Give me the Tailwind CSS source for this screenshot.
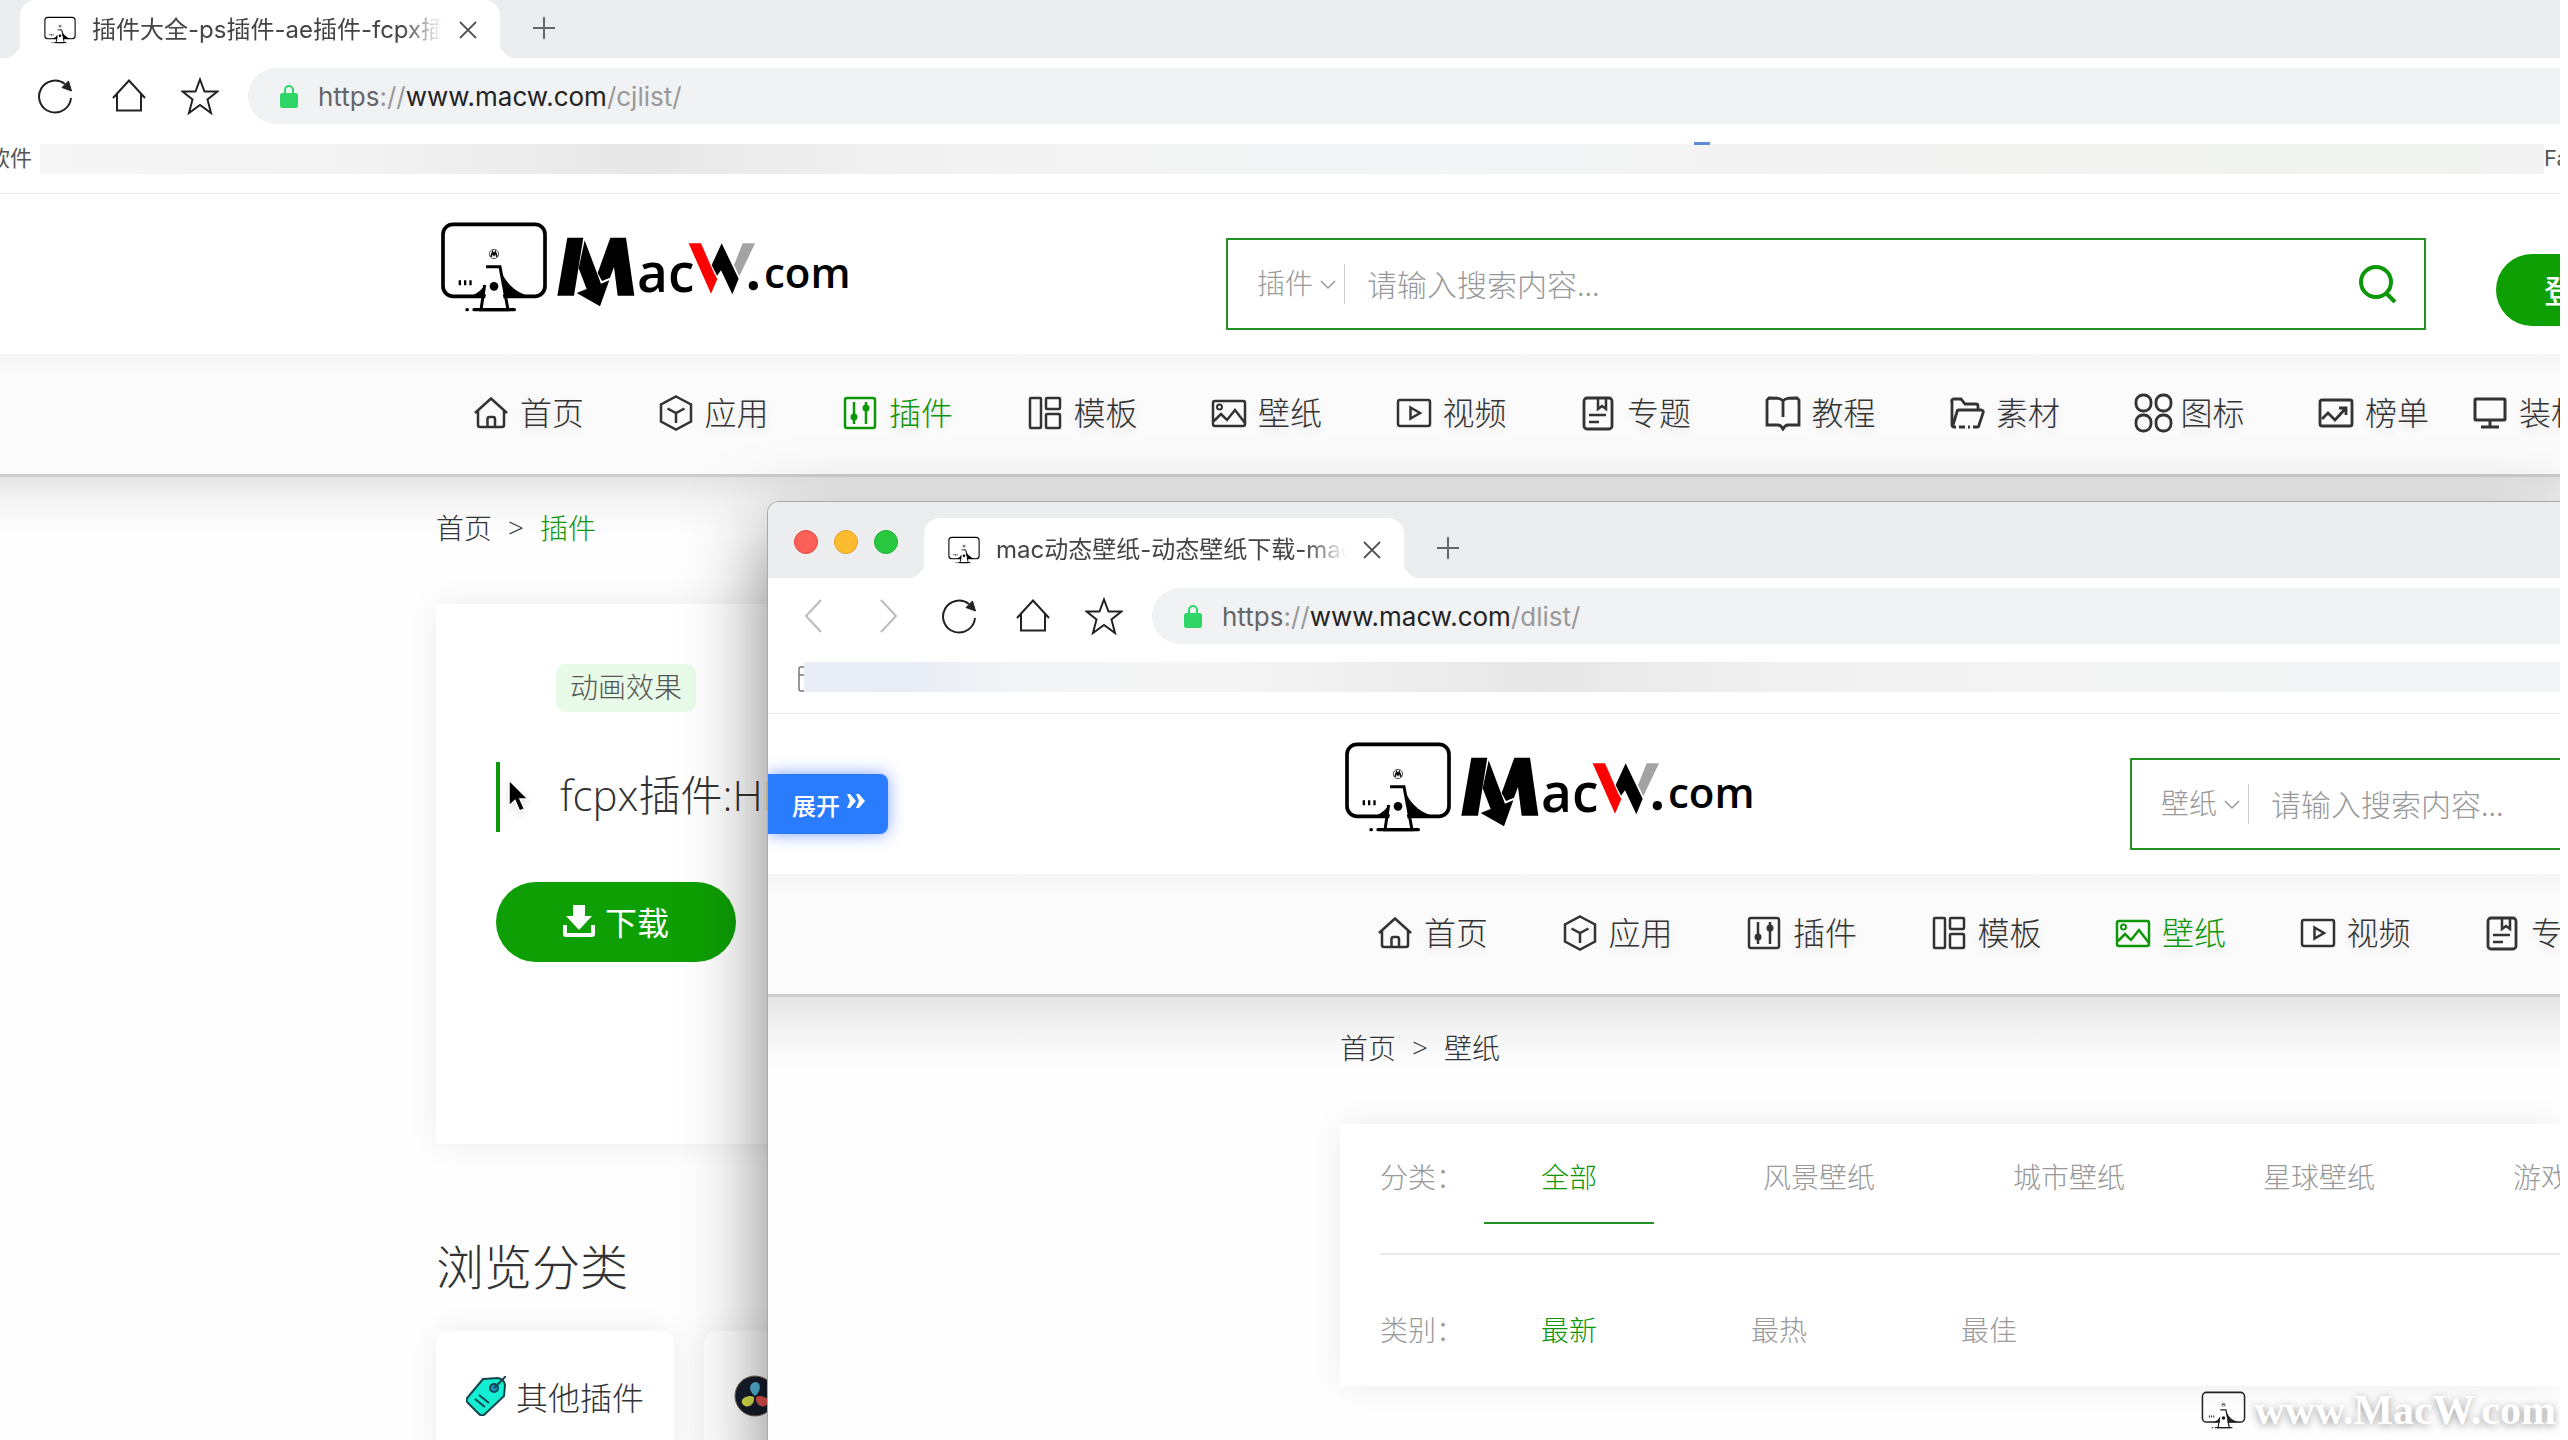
<!DOCTYPE html>
<html lang="zh-CN">
<head>
<meta charset="utf-8">
<title>插件大全-ps插件-ae插件-fcpx插件</title>
<script src="https://cdn.jsdelivr.net/npm/@tailwindcss/browser@4"></script>
</head>
<body class="bg-white font-['Noto_Sans_CJK_SC',sans-serif] text-[#333]">

<svg class="hidden" aria-hidden="true">
  <symbol id="monitor" viewBox="30 34 324 276">
    <rect x="39" y="44" width="306" height="216" rx="30" fill="none" stroke="currentColor" stroke-width="11"/>
    <circle cx="192" cy="133" r="14" fill="none" stroke="currentColor" stroke-width="2"/>
    <path d="M183 141l5-14 4 9 4-9 5 14" fill="none" stroke="currentColor" stroke-width="5"/>
    <path d="M86 212h7v15h-7zM102 212h7v15h-7zM118 212h7v15h-7z" fill="currentColor"/>
    <path d="M112 262C136 256 152 244 164 226L160 262zM208 172C222 214 252 246 294 258V262H228z" fill="currentColor"/>
    <path d="M164 226L153 300H234L210 171H168" fill="none" stroke="currentColor" stroke-width="9"/>
    <path d="M166 262L162 295H226L216 240L206 210H176L170 250z" fill="#fff"/>
    <circle cx="192" cy="230" r="13" fill="currentColor"/>
    <path d="M132 300H253M111 300h1" stroke="currentColor" stroke-width="10" stroke-linecap="round"/>
  </symbol>
  <symbol id="logo" viewBox="30 34 1230 279">
    <use href="#monitor" x="30" y="34" width="324" height="276" color="#000"/>
    <path d="M412 84H460L432 258H382z" fill="#000"/>
    <path d="M464 92L513 222L538 212L510 290L440 250L470 238L446 176z" fill="#000"/>
    <path d="M541 84H588L613 258H563L552 172L540 204L516 214L503 190z" fill="#000"/>
    <text x="621" y="246" font-family="Open Sans" font-weight="600" font-size="160" fill="#000">ac</text>
    <path d="M776 101H813L852 190L862 208L843 252z" fill="#f00"/>
    <path d="M875 101L926 207L907 254L873 182L861 198L845 166z" fill="#000"/>
    <path d="M938 101H975L928 200L912 166z" fill="#a3a3a3"/>
    <circle cx="970" cy="228" r="14" fill="#000"/>
    <text x="1002" y="236" font-family="Open Sans" font-weight="600" font-size="126" fill="#000">com</text>
  </symbol>
  <symbol id="close" viewBox="0 0 18 18"><path d="M1 1l16 16M17 1L1 17" fill="none" stroke="#555" stroke-width="1.800"/></symbol>
  <symbol id="plus" viewBox="0 0 24 24"><path d="M12 1v22M1 12h22" fill="none" stroke="#666" stroke-width="2"/></symbol>
  <symbol id="reload" viewBox="0 0 36 36"><path d="M34 20A16 16 0 1 1 28 6" fill="none" stroke="#222" stroke-width="2"/><path d="M34.500 13L25 9.500L31.500 3z" fill="#222" stroke="#222"/></symbol>
  <symbol id="home" viewBox="0 0 36 36"><path d="M2 20L18 2.500L34 20M6 16V32.500H30V16" fill="none" stroke="#222" stroke-width="2"/></symbol>
  <symbol id="star" viewBox="0 0 38 38"><path d="M19 2.500L23.500 14.500H36.500L26.500 22.500L30 36L19 28L8 36L11.500 22.500L1.500 14.500H14.500z" fill="none" stroke="#222" stroke-width="2"/></symbol>
  <symbol id="lock" viewBox="0 0 18 23"><rect y="8" width="18" height="15" rx="2.500" fill="#2fd566"/><path d="M5 9V5a4 4 0 0 1 8 0V9" fill="none" stroke="#2fd566" stroke-width="2"/></symbol>
  <symbol id="chev" viewBox="0 0 16 10"><path d="M1 1l7 7 7-7" fill="none" stroke="#999" stroke-width="1.500"/></symbol>
  <symbol id="search" viewBox="0 0 40 40"><circle cx="18" cy="18" r="15" fill="none" stroke="#0d9608" stroke-width="4"/><path d="M29 30l8 8" stroke="#0d9608" stroke-width="4"/></symbol>
  <symbol id="n-home" viewBox="0 0 36 36"><path d="M2 18L18 3.500L34 18M5 15.500V30a2 2 0 0 0 2 2H29a2 2 0 0 0 2-2V15.500M14.500 32V24a2 2 0 0 1 2-2H20a2 2 0 0 1 2 2V32" fill="none" stroke="currentColor" stroke-width="2.500"/></symbol>
  <symbol id="n-app" viewBox="0 0 36 36"><path d="M18 1.500L33 9.500V26.500L18 34.500L3 26.500V9.500zM9.500 13.500L18 18L26.500 13.500M18 18V28" fill="none" stroke="currentColor" stroke-width="2.500"/></symbol>
  <symbol id="n-plug" viewBox="0 0 36 36"><rect x="3" y="3" width="30" height="30" rx="2" fill="none" stroke="currentColor" stroke-width="2.500"/><path d="M12 7V29M24 7V29" stroke="currentColor" stroke-width="2.500"/><circle cx="12" cy="22" r="3.500" fill="currentColor"/><circle cx="24" cy="13" r="3.500" fill="currentColor"/></symbol>
  <symbol id="n-tpl" viewBox="0 0 36 36"><path d="M4 3h9a1 1 0 0 1 1 1V32a1 1 0 0 1-1 1H4a1 1 0 0 1-1-1V4a1 1 0 0 1 1-1zM20 3H32a1 1 0 0 1 1 1V13a1 1 0 0 1-1 1H20a1 1 0 0 1-1-1V4a1 1 0 0 1 1-1zM20 19H32a1 1 0 0 1 1 1V32a1 1 0 0 1-1 1H20a1 1 0 0 1-1-1V20a1 1 0 0 1 1-1z" fill="none" stroke="currentColor" stroke-width="2.500"/></symbol>
  <symbol id="n-pic" viewBox="0 0 36 36"><rect x="2" y="6" width="32" height="25" rx="2" fill="none" stroke="currentColor" stroke-width="2.500"/><circle cx="8.500" cy="12" r="2.500" fill="none" stroke="currentColor" stroke-width="2"/><path d="M3 26l7-7 6 6 8-10 10 13" fill="none" stroke="currentColor" stroke-width="2.500"/></symbol>
  <symbol id="n-video" viewBox="0 0 36 36"><rect x="2" y="5" width="32" height="26" rx="2" fill="none" stroke="currentColor" stroke-width="2.500"/><path d="M14.500 12.500L24 18L14.500 23.500z" fill="none" stroke="currentColor" stroke-width="2.500"/></symbol>
  <symbol id="n-topic" viewBox="0 0 36 36"><rect x="4" y="3" width="28" height="31" rx="3" fill="none" stroke="currentColor" stroke-width="2.800"/><path d="M18 3V14l4-3 4 3V3M9 20H26M9 27H19" fill="none" stroke="currentColor" stroke-width="2.500"/></symbol>
  <symbol id="n-book" viewBox="0 0 36 36"><path d="M18 6C16 3 12 3 4 3L2 5V30H13C16 30 17 32 18 34C19 32 20 30 23 30H34V5L32 3C24 3 20 3 18 6zM18 6V22" fill="none" stroke="currentColor" stroke-width="2.800"/></symbol>
  <symbol id="n-folder" viewBox="0 0 36 36"><path d="M7 32H5a2 2 0 0 1-2-2V7a2 2 0 0 1 2-3H12l4 5H27a2 2 0 0 1 2 2V15M4 30L8 17a2 2 0 0 1 2-2H32a2 2 0 0 1 2 3L30 30a2 2 0 0 1-2 2H24M10 32h6M19 32h2" fill="none" stroke="currentColor" stroke-width="2.800"/></symbol>
  <symbol id="n-icons" viewBox="0 0 40 40"><g fill="none" stroke="currentColor" stroke-width="2.800"><rect x="2" y="2" width="15" height="16" rx="7"/><rect x="22" y="2" width="15" height="16" rx="7"/><rect x="2" y="22" width="15" height="16" rx="7"/><rect x="22" y="22" width="15" height="16" rx="7"/></g></symbol>
  <symbol id="n-rank" viewBox="0 0 36 36"><rect x="2" y="5" width="32" height="26" rx="2" fill="none" stroke="currentColor" stroke-width="2.800"/><path d="M4 24l6-6 7 7L28 13M21 13h7v7" fill="none" stroke="currentColor" stroke-width="2.800"/></symbol>
  <symbol id="n-pc" viewBox="0 0 36 36"><path d="M4 4H32a1 1 0 0 1 1 1V24a1 1 0 0 1-1 1H4a1 1 0 0 1-1-1V5a1 1 0 0 1 1-1zM18 25V31M9 32H27" fill="none" stroke="currentColor" stroke-width="3"/></symbol>
</svg>

<div class="relative mr-2 h-screen overflow-hidden">

  <!-- Back window -->
  <div class="font-['Inter','Noto_Sans_CJK_SC',sans-serif]">
    <div class="flex h-[58px] bg-[#ecedef] pl-5">
      <div class="relative flex w-[480px] items-center rounded-t-2xl bg-white pt-[2px] pl-6 before:absolute before:bottom-0 before:-left-4 before:size-4 before:bg-[radial-gradient(circle_at_0_0,transparent_16px,white_16px)] after:absolute after:-right-4 after:bottom-0 after:size-4 after:bg-[radial-gradient(circle_at_100%_0,transparent_16px,white_16px)]">
        <svg class="h-7 w-8 text-black"><use href="#monitor"/></svg>
        <span class="ml-4 w-[350px] overflow-hidden text-2xl whitespace-nowrap text-[#444] [mask-image:linear-gradient(to_right,black_310px,transparent_350px)]">插件大全-ps插件-ae插件-fcpx插件</span>
        <button aria-label="关闭标签页" class="ml-[17px]"><svg class="size-[18px]"><use href="#close"/></svg></button>
      </div>
      <button aria-label="新标签页" class="ml-8 pb-[2px]"><svg class="size-6"><use href="#plus"/></svg></button>
    </div>
    <div class="flex h-[76px] items-center pl-[37px]">
      <button aria-label="刷新"><svg class="size-9"><use href="#reload"/></svg></button>
      <button aria-label="主页" class="ml-[38px]"><svg class="size-9"><use href="#home"/></svg></button>
      <button aria-label="收藏" class="ml-[34px]"><svg class="size-[38px]"><use href="#star"/></svg></button>
      <div class="ml-[29px] flex h-14 flex-1 items-center rounded-l-full bg-[#f1f2f4] pl-8 text-[26px] text-[#666]">
        <svg class="mr-5 h-[23px] w-[18px] shrink-0"><use href="#lock"/></svg>
        <span>https<span class="text-[#999]">://</span><span class="text-[#222]">www.macw.com</span><span class="text-[#999]">/cjlist/</span></span>
      </div>
    </div>
    <div class="relative flex h-[60px] items-start overflow-hidden border-b border-[#e6e6e6] pt-[10px] text-[22px] leading-[28px] whitespace-nowrap text-[#555]">
      <span class="-ml-[12px] w-[52px] shrink-0">软件</span>
      <div class="h-[30px] flex-1 bg-[linear-gradient(to_right,#f6f6f6_0,#f3f3f3_12%,#e8e7e7_24%,#f0f0f0_33%,#f3f3f3_40%,#f3f5f6_56%,#f3f2f2_72%,#f1f4f1_95%,#f2f2f2_100%)]"></div>
      <span class="w-4 shrink-0 overflow-hidden">Fa</span>
      <i class="absolute top-2 left-[1694px] h-[3px] w-4 bg-[#5b8bd8]"></i>
    </div>
  </div>

  <div class="font-light">
    <header class="relative z-10 flex h-[160px] items-start overflow-hidden bg-white pt-[27px] pl-[440px]">
      <a href="#" aria-label="MacW.com" class="shrink-0"><svg class="h-[93px] w-[410px]"><use href="#logo"/></svg></a>
      <form class="mt-[17px] ml-[376px] flex h-[92px] w-[1200px] shrink-0 items-center border-2 border-[#23901f] pr-[26px] pl-[29px]">
        <label class="relative flex h-10 w-[88px] items-center border-r border-[#ccc]">
          <select aria-label="搜索类别" class="w-full appearance-none pb-1 text-[28px] leading-9 text-[#999]"><option>插件</option></select>
          <svg class="absolute top-4 right-2 h-[10px] w-4"><use href="#chev"/></svg>
        </label>
        <input type="text" aria-label="搜索" placeholder="请输入搜索内容..." class="ml-[22px] min-w-0 flex-1 pb-[2px] text-[30px] placeholder-[#999]">
        <button type="button" aria-label="搜索"><svg class="size-10"><use href="#search"/></svg></button>
      </form>
      <button class="mt-[33px] ml-[70px] h-[72px] w-[160px] shrink-0 rounded-full bg-[#0d9f04] pb-[2px] text-[32px] font-medium text-white">登录</button>
    </header>
    <nav class="relative flex h-[123px] items-start overflow-hidden border-b-[3px] border-[#ccc] bg-linear-to-b from-[#f5f5f5] to-[#fbfbfb] to-20% pt-[33px] pl-[473px] text-[32px] leading-[48px] whitespace-nowrap [text-shadow:0_4px_8px_rgba(0,0,0,.12)]">
      <div class="grid w-[1845px] shrink-0 grid-cols-10">
        <a href="#" class="flex items-center gap-[11px]"><svg class="mt-1 size-9"><use href="#n-home"/></svg>首页</a>
        <a href="#" class="flex items-center gap-[11px]"><svg class="mt-1 size-9"><use href="#n-app"/></svg>应用</a>
        <a href="#" class="flex items-center gap-[11px] text-[#0d9608]"><svg class="mt-1 size-9"><use href="#n-plug"/></svg>插件</a>
        <a href="#" class="flex items-center gap-[11px]"><svg class="mt-1 size-9"><use href="#n-tpl"/></svg>模板</a>
        <a href="#" class="flex items-center gap-[11px]"><svg class="mt-1 size-9"><use href="#n-pic"/></svg>壁纸</a>
        <a href="#" class="flex items-center gap-[11px]"><svg class="mt-1 size-9"><use href="#n-video"/></svg>视频</a>
        <a href="#" class="flex items-center gap-[11px]"><svg class="mt-1 size-9"><use href="#n-topic"/></svg>专题</a>
        <a href="#" class="flex items-center gap-[11px]"><svg class="mt-1 size-9"><use href="#n-book"/></svg>教程</a>
        <a href="#" class="flex items-center gap-[11px]"><svg class="mt-1 size-9"><use href="#n-folder"/></svg>素材</a>
        <a href="#" class="flex items-center gap-[7px]"><svg class="mt-1 size-10"><use href="#n-icons"/></svg>图标</a>
      </div>
      <a href="#" class="flex w-[154px] shrink-0 items-center gap-[11px]"><svg class="mt-1 size-9"><use href="#n-rank"/></svg>榜单</a>
      <a href="#" class="flex shrink-0 items-center gap-[11px]"><svg class="mt-1 size-9"><use href="#n-pc"/></svg>装机</a>
    </nav>
    <main class="bg-[linear-gradient(to_bottom,#e4e4e4,#f4f4f4_24px,#fefefe_56px)] pt-[30px] pl-[436px]">
      <div class="flex h-10 items-center gap-4 text-[28px] leading-10"><a href="#">首页</a><span class="font-['Open_Sans']">&gt;</span><a href="#" class="text-[#0d9608]">插件</a></div>
      <section class="mt-[57px] flex h-[540px] flex-col items-start bg-white pt-[60px] pl-[60px] shadow-[0_0_30px_rgba(0,0,0,.07)]">
        <a href="#" class="ml-[60px] rounded-[10px] bg-[#e8fae8] px-[14px] pb-1 text-[28px] leading-[44px] text-[#555]">动画效果</a>
        <h1 class="mt-[50px] border-l-4 border-[#0d9608] pb-1 pl-[60px] font-['Open_Sans','Noto_Sans_CJK_SC'] text-[42px] leading-[66px] font-light whitespace-nowrap">fcpx插件:HD</h1>
        <button class="mt-[50px] flex h-20 w-60 items-center justify-center gap-[10px] rounded-full bg-[#0d9f04] pb-[2px] text-[32px] font-normal text-white"><svg class="size-8" viewBox="0 0 32 32" fill="#fff"><path d="M10 0h12v11h7L16 25L3 11h7zM0 20h4v8h24v-8h4v9a3 3 0 0 1-3 3H3a3 3 0 0 1-3-3z"/></svg>下载</button>
      </section>
      <h2 class="mt-[84px] text-[48px] leading-[72px] font-light">浏览分类</h2>
      <div class="mt-[31px] flex gap-[30px] text-[32px] whitespace-nowrap">
        <a href="#" class="flex h-[130px] w-[238px] shrink-0 items-center gap-[10px] rounded-xl bg-white pl-[30px] shadow-[0_0_30px_rgba(0,0,0,.07)]">
          <svg class="size-10 shrink-0" viewBox="0 0 40 40"><path d="M17 3L32 2Q38 3 39 9L38 20L19 38Q16 41 13 38L2 27Q-1 24 2 21z" fill="#14efd3" stroke="#17454d" stroke-width="2"/><circle cx="28" cy="12" r="4" fill="#1697c9" stroke="#17454d" stroke-width="2"/><path d="M28 12L40 0M13 19l10 8M9 23l10 8" stroke="#17454d" stroke-width="2" fill="none"/></svg>其他插件</a>
        <a href="#" aria-label="达芬奇插件" class="flex h-[130px] w-[238px] shrink-0 items-center rounded-xl bg-white pl-[30px] shadow-[0_0_30px_rgba(0,0,0,.07)]">
          <svg class="size-[42px] shrink-0" viewBox="0 0 42 42"><circle cx="21" cy="21" r="20" fill="#161d2b" stroke="#7b6a58"/><path d="M21 21C14 16 15 8 21 7S28 16 21 21z" fill="#53b9de"/><path d="M20 22C21 31 12 34 8.500 29S14 19 20 22z" fill="#dbe34c"/><path d="M22 22C21 31 30 34 33.500 29S28 19 22 22z" fill="#e8564f"/></svg></a>
      </div>
    </main>
  </div>

  <svg class="absolute top-[778px] left-[507px] h-9 w-6 drop-shadow-md" viewBox="0 0 24 36"><path d="M2 2V28L8 22.500L12.500 33L17.500 31L13 21H21z" fill="#000" stroke="#fff" stroke-width="1.500"/></svg>

  <!-- Front window -->
  <div class="absolute top-[501px] right-0 -bottom-10 left-[767px] z-20 overflow-hidden rounded-tl-xl border-t border-l border-[#a8a8a8] bg-white shadow-[0_30px_80px_rgba(0,0,0,.5)]">
    <div class="font-['Inter','Noto_Sans_CJK_SC',sans-serif]">
      <div class="flex h-[76px] items-end bg-[#ecedef] pl-[26px]">
        <div class="flex h-[72px] w-[130px] gap-4">
          <button aria-label="关闭" class="mt-6 size-6 rounded-full border border-[#e2463f] bg-[#fc5f57]"></button>
          <button aria-label="最小化" class="mt-6 size-6 rounded-full border border-[#e0a02a] bg-[#fdbc2e]"></button>
          <button aria-label="最大化" class="mt-6 size-6 rounded-full border border-[#1fae33] bg-[#28c840]"></button>
        </div>
        <div class="relative flex h-[60px] w-[480px] items-center rounded-t-2xl bg-white pt-1 pl-6 before:absolute before:bottom-0 before:-left-4 before:size-4 before:bg-[radial-gradient(circle_at_0_0,transparent_16px,white_16px)] after:absolute after:-right-4 after:bottom-0 after:size-4 after:bg-[radial-gradient(circle_at_100%_0,transparent_16px,white_16px)]">
          <svg class="h-7 w-8 text-black"><use href="#monitor"/></svg>
          <span class="ml-4 w-[350px] overflow-hidden text-2xl whitespace-nowrap text-[#444] [mask-image:linear-gradient(to_right,black_310px,transparent_350px)]">mac动态壁纸-动态壁纸下载-mac壁纸</span>
          <button aria-label="关闭标签页" class="ml-[17px]"><svg class="size-[18px]"><use href="#close"/></svg></button>
        </div>
        <button aria-label="新标签页" class="ml-8 flex h-[60px] items-center"><svg class="size-6"><use href="#plus"/></svg></button>
      </div>
      <div class="flex h-[76px] items-center pl-[36px]">
        <button aria-label="后退"><svg class="h-[34px] w-[18px]" viewBox="0 0 18 34"><path d="M17 1L2 17L17 33" fill="none" stroke="#bbb" stroke-width="2"/></svg></button>
        <button aria-label="前进" class="ml-[58px]"><svg class="h-[34px] w-[18px]" viewBox="0 0 18 34"><path d="M1 1L16 17L1 33" fill="none" stroke="#bbb" stroke-width="2"/></svg></button>
        <button aria-label="刷新" class="ml-[43px]"><svg class="size-9"><use href="#reload"/></svg></button>
        <button aria-label="主页" class="ml-[38px]"><svg class="size-9"><use href="#home"/></svg></button>
        <button aria-label="收藏" class="ml-[34px]"><svg class="size-[38px]"><use href="#star"/></svg></button>
        <div class="ml-[29px] flex h-14 flex-1 items-center rounded-l-full bg-[#f1f2f4] pl-8 text-[26px] text-[#666]">
          <svg class="mr-5 h-[23px] w-[18px] shrink-0"><use href="#lock"/></svg>
          <span>https<span class="text-[#999]">://</span><span class="text-[#222]">www.macw.com</span><span class="text-[#999]">/dlist/</span></span>
        </div>
      </div>
      <div class="flex h-[60px] items-start border-b border-[#e6e6e6] pt-2 pl-[30px]">
        <svg class="mt-1 h-[26px] w-[6px]" viewBox="0 0 6 26"><path d="M6 1H3Q1 1 1 3V23Q1 25 3 25H6M1 9H6" fill="none" stroke="#777" stroke-width="1.500"/></svg>
        <div class="h-[30px] flex-1 bg-[linear-gradient(to_right,#e9edf5_0,#e8ecf5_6%,#f3f4f6_12%,#f5f5f5_24%,#e7e7e7_42%,#f0f0f0_55%,#f4f4f4_70%,#f2f4f5_100%)]"></div>
      </div>
    </div>
    <div class="relative font-light">
      <header class="relative z-10 flex h-[160px] items-start overflow-hidden bg-white pt-[27px] pl-[576px]">
        <a href="#" aria-label="MacW.com" class="shrink-0"><svg class="h-[93px] w-[410px]"><use href="#logo"/></svg></a>
        <form class="mt-[17px] ml-[376px] flex h-[92px] w-[1200px] shrink-0 items-center border-2 border-[#23901f] pr-[26px] pl-[29px]">
          <label class="relative flex h-10 w-[88px] items-center border-r border-[#ccc]">
            <select aria-label="搜索类别" class="w-full appearance-none pb-1 text-[28px] leading-9 text-[#999]"><option>壁纸</option></select>
            <svg class="absolute top-4 right-2 h-[10px] w-4"><use href="#chev"/></svg>
          </label>
          <input type="text" aria-label="搜索" placeholder="请输入搜索内容..." class="ml-[22px] min-w-0 flex-1 pb-[2px] text-[30px] placeholder-[#999]">
        </form>
      </header>
      <button class="absolute top-[60px] left-0 z-10 flex h-[60px] w-[120px] items-center gap-[6px] rounded-r-lg bg-[#2a7cff] pt-[2px] pl-6 text-2xl font-medium text-white shadow-[0_0_16px_rgba(42,100,255,.6)]">展开<svg class="mb-2 h-4 w-5" viewBox="0 0 20 16"><path d="M1 1h3l6 7-6 7H1l3-7zM10 1h3l6 7-6 7h-3l3-7z" fill="#fff"/></svg></button>
      <nav class="relative h-[123px] overflow-hidden border-b-[3px] border-[#ccc] bg-linear-to-b from-[#f5f5f5] to-[#fbfbfb] to-20% pt-[33px] pl-[609px] text-[32px] leading-[48px] whitespace-nowrap [text-shadow:0_4px_8px_rgba(0,0,0,.12)]">
        <div class="grid w-[1845px] grid-cols-10">
          <a href="#" class="flex items-center gap-[11px]"><svg class="mt-1 size-9"><use href="#n-home"/></svg>首页</a>
          <a href="#" class="flex items-center gap-[11px]"><svg class="mt-1 size-9"><use href="#n-app"/></svg>应用</a>
          <a href="#" class="flex items-center gap-[11px]"><svg class="mt-1 size-9"><use href="#n-plug"/></svg>插件</a>
          <a href="#" class="flex items-center gap-[11px]"><svg class="mt-1 size-9"><use href="#n-tpl"/></svg>模板</a>
          <a href="#" class="flex items-center gap-[11px] text-[#0d9608]"><svg class="mt-1 size-9"><use href="#n-pic"/></svg>壁纸</a>
          <a href="#" class="flex items-center gap-[11px]"><svg class="mt-1 size-9"><use href="#n-video"/></svg>视频</a>
          <a href="#" class="flex items-center gap-[11px]"><svg class="mt-1 size-9"><use href="#n-topic"/></svg>专题</a>
        </div>
      </nav>
      <main class="bg-[linear-gradient(to_bottom,#e4e4e4,#f4f4f4_36px,#fefefe_72px)] pt-[30px] pb-20 pl-[572px]">
        <div class="flex h-10 items-center gap-4 text-[28px] leading-10"><a href="#">首页</a><span class="font-['Open_Sans']">&gt;</span><a href="#">壁纸</a></div>
        <section class="mt-[57px] h-[262px] bg-white pl-10 text-[28px] whitespace-nowrap text-[#999] shadow-[0_0_30px_rgba(0,0,0,.07)]">
          <div class="flex h-[131px] items-start overflow-hidden border-b-2 border-[#ebebeb] pt-[6px]">
            <span class="w-[64px] shrink-0 leading-[92px]">分类：</span>
            <a href="#" class="flex w-[250px] shrink-0 justify-center text-[#0d9608]"><span class="w-[170px] border-b-2 border-[#23901f] text-center leading-[92px]">全部</span></a>
            <a href="#" class="w-[250px] shrink-0 text-center leading-[92px]">风景壁纸</a>
            <a href="#" class="w-[250px] shrink-0 text-center leading-[92px]">城市壁纸</a>
            <a href="#" class="w-[250px] shrink-0 text-center leading-[92px]">星球壁纸</a>
            <a href="#" class="w-[250px] shrink-0 text-center leading-[92px]">游戏壁纸</a>
          </div>
          <div class="flex items-start pt-[28px] leading-[92px]">
            <span class="w-[84px] shrink-0">类别：</span>
            <a href="#" class="w-[210px] shrink-0 text-center text-[#0d9608]">最新</a>
            <a href="#" class="w-[210px] shrink-0 text-center">最热</a>
            <a href="#" class="w-[210px] shrink-0 text-center">最佳</a>
          </div>
        </section>
      </main>
    </div>
  </div>

  <div class="absolute right-1 bottom-[6px] z-30 flex items-center gap-2">
    <svg class="h-[38px] w-[45px] text-[#222]"><use href="#monitor"/></svg>
    <span class="font-['Liberation_Serif',serif] text-[42px] leading-[48px] font-bold text-white [text-shadow:0_2px_8px_rgba(0,0,0,.4)]">www.MacW.com</span>
  </div>
</div>
</body>
</html>
